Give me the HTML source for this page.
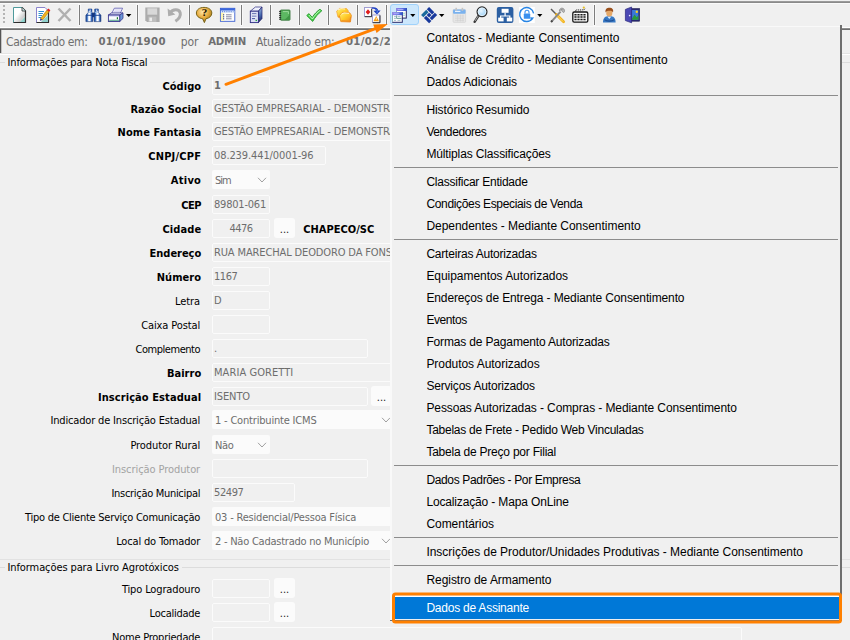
<!DOCTYPE html>
<html><head><meta charset="utf-8"><title>Cadastro</title>
<style>
html,body{margin:0;padding:0;}
body{width:850px;height:640px;overflow:hidden;background:#f0f0f0;position:relative;font-family:"DejaVu Sans Condensed","Liberation Sans",sans-serif;font-size:11px;color:#000;}
.a{position:absolute;}
.l{position:absolute;right:648.8px;white-space:nowrap;height:19px;line-height:21px;text-align:right;}
.b{font-weight:bold;}
.i{position:absolute;box-sizing:border-box;border:1px solid #fbfbfb;border-radius:2px;background:#f0f0f0;height:19px;line-height:17px;color:#6d6d6d;white-space:nowrap;overflow:hidden;padding-left:1px;}
.s{position:absolute;box-sizing:border-box;border-radius:2px;background:#fbfbfb;height:19px;line-height:22px;color:#6d6d6d;white-space:nowrap;overflow:hidden;padding-left:3px;}
.btn{position:absolute;box-sizing:border-box;border-radius:3px;background:#fbfbfb;width:21px;height:20px;text-align:center;line-height:23px;color:#222;}
.hl{position:absolute;height:1px;}
.sep{position:absolute;width:1px;top:5px;height:20px;background:#7d7d7d;box-shadow:0 0 0 1px #f8f8f8;}
.hd{position:absolute;top:30px;height:23px;line-height:24px;font-size:12px;color:#6f6f6f;white-space:nowrap;}
.m{position:absolute;left:36.4px;height:22px;line-height:22px;white-space:nowrap;}
.ms{position:absolute;left:4px;right:4px;height:1px;background:#8c8c8c;}
.menu{background:#f0f0f0;font-family:"Liberation Sans",sans-serif;font-size:12px;color:#000;}
</style></head><body>

<div class="hl" style="left:0;top:1px;width:850px;background:#9b9b9b"></div>
<div class="hl" style="left:0;top:2px;width:850px;background:#8a8a8a"></div>
<div class="hl" style="left:0;top:3px;width:850px;background:#fafafa"></div>
<div class="hl" style="left:0;top:27px;width:850px;background:#ffffff"></div>
<div class="hl" style="left:0;top:28px;width:850px;background:#8e8e8e"></div>
<div class="hl" style="left:0;top:29px;width:850px;background:#6f6f6f"></div>
<div class="a" style="left:0;top:29px;width:1px;height:24px;background:#545454"></div>
<div class="a" style="left:1px;top:30px;width:1px;height:23px;background:#c4c4c4"></div>
<div class="hl" style="left:0;top:53px;width:850px;background:#e4e4e4"></div>
<div class="hl" style="left:0;top:54px;width:850px;background:#ffffff"></div>
<div class="a" style="left:3px;top:5px;width:2px;height:2px;background:#b4b4b4"></div>
<div class="a" style="left:3px;top:9px;width:2px;height:2px;background:#b4b4b4"></div>
<div class="a" style="left:3px;top:13px;width:2px;height:2px;background:#b4b4b4"></div>
<div class="a" style="left:3px;top:17px;width:2px;height:2px;background:#b4b4b4"></div>
<div class="a" style="left:3px;top:21px;width:2px;height:2px;background:#b4b4b4"></div>
<div class="sep" style="left:79px"></div>
<div class="sep" style="left:137px"></div>
<div class="sep" style="left:189px"></div>
<div class="sep" style="left:241px"></div>
<div class="sep" style="left:270px"></div>
<div class="sep" style="left:299px"></div>
<div class="sep" style="left:328px"></div>
<div class="sep" style="left:357px"></div>
<div class="sep" style="left:386px"></div>
<div class="sep" style="left:594px"></div>
<svg class="a" style="left:0;top:0" width="850" height="27" viewBox="0 0 850 27">
<defs>
<linearGradient id="gdoc" x1="0" y1="0" x2="1" y2="1"><stop offset="0.4" stop-color="#ffffff"/><stop offset="0.72" stop-color="#cfcfcf"/><stop offset="0.9" stop-color="#f6f6f6"/></linearGradient>
<linearGradient id="gbin" x1="0" y1="0" x2="1" y2="0"><stop offset="0" stop-color="#16408f"/><stop offset="0.22" stop-color="#4a80cc"/><stop offset="0.42" stop-color="#ffffff"/><stop offset="0.6" stop-color="#ffffff"/><stop offset="0.82" stop-color="#3a6cc0"/><stop offset="1" stop-color="#122f78"/></linearGradient>
<linearGradient id="gsrv" x1="0" y1="0" x2="0" y2="1"><stop offset="0" stop-color="#9ab4dc"/><stop offset="0.5" stop-color="#4a6cb0"/><stop offset="1" stop-color="#161e5c"/></linearGradient>
<radialGradient id="ghelp" cx="0.4" cy="0.3" r="0.7"><stop offset="0" stop-color="#ffe6a6"/><stop offset="0.55" stop-color="#e6aa3c"/><stop offset="1" stop-color="#a07a1c"/></radialGradient>
<linearGradient id="gfold" x1="0" y1="0" x2="1" y2="1"><stop offset="0" stop-color="#fff27a"/><stop offset="0.5" stop-color="#ffcc28"/><stop offset="1" stop-color="#f28c1c"/></linearGradient>
<radialGradient id="glens" cx="0.4" cy="0.4" r="0.7"><stop offset="0" stop-color="#e8f6ff"/><stop offset="1" stop-color="#8cc8f4"/></radialGradient>
<linearGradient id="gwin" x1="0" y1="0" x2="1" y2="0"><stop offset="0" stop-color="#907cec"/><stop offset="0.5" stop-color="#6a78e4"/><stop offset="1" stop-color="#2a50c8"/></linearGradient>
<linearGradient id="gprn" x1="0" y1="0" x2="0" y2="1"><stop offset="0" stop-color="#b4b8ea"/><stop offset="0.4" stop-color="#ffffff"/><stop offset="0.8" stop-color="#f0f6f4"/><stop offset="1" stop-color="#bfe0d8"/></linearGradient>
</defs>
<!-- new document -->
<g>
<path d="M13.5 7.5 H22 L25.5 11 V22.5 H13.5 Z" fill="url(#gdoc)" stroke="#4f9a9c" stroke-width="1"/>
<path d="M20 22 L25 17 V22 Z" fill="#8fd2cc"/>
<path d="M22 7.5 L25.5 11 V22.5 H13.5" fill="none" stroke="#2e2e2e" stroke-width="1.2"/>
<path d="M22 7.5 V11 H25.5" fill="#cfeeee" stroke="#2e2e2e" stroke-width="0.8"/>
</g>
<!-- edit document -->
<g>
<path d="M36.5 7.5 H45 L48.5 11 V22.5 H36.5 Z" fill="#ffffff" stroke="#8a84cc" stroke-width="1"/>
<path d="M48.5 11 V22.5 H36.5" fill="none" stroke="#2e2e2e" stroke-width="1.2"/>
<path d="M41 22 L48 15 V22 Z" fill="#8fd0cc"/>
<path d="M38.5 11.5 H44 M38.5 13.5 H43 M38.5 15.5 H42 M38.5 17.5 H41" stroke="#2f8fd0" stroke-width="1"/>
<path d="M40.5 18.5 L47 10 L49.2 11.8 L42.5 20 Z" fill="#f2b41c" stroke="#8a5a00" stroke-width="0.5"/>
<path d="M47 10 L48.3 8.4 L50.4 10.2 L49.2 11.8 Z" fill="#e02020"/>
<path d="M40.5 18.5 L42.5 20 L39.8 20.8 Z" fill="#1c2a8a"/>
</g>
<!-- delete X (disabled) -->
<path d="M58.5 8.5 L70.5 21 M70.5 8.5 L58.5 21" stroke="#b0b0b0" stroke-width="2.5" fill="none"/>
<!-- binoculars -->
<g>
<rect x="91.8" y="12.6" width="3.6" height="4.6" fill="#183a82"/>
<path d="M88.3 9 H91.8 V12.4 L92.7 15.2 V21.6 H85.9 V15.2 L88.3 12.4 Z" fill="url(#gbin)" stroke="#14357c" stroke-width="0.6"/>
<path d="M94.8 9 H98.3 V12.4 L100.9 15.2 V21.6 H94.1 V15.2 L94.8 12.4 Z" fill="url(#gbin)" stroke="#14357c" stroke-width="0.6"/>
<rect x="88.3" y="9" width="3.5" height="2.2" fill="#1f4fa4"/><rect x="94.8" y="9" width="3.5" height="2.2" fill="#1f4fa4"/>
<rect x="89.4" y="9.6" width="1.4" height="1.2" fill="#eef4ff"/><rect x="95.9" y="9.6" width="1.4" height="1.2" fill="#eef4ff"/>
<path d="M88.6 12.4 H91.6 M95 12.4 H98" stroke="#9cc4ee" stroke-width="0.9"/>
<path d="M86.4 15.3 H92.4 M94.4 15.3 H100.6" stroke="#173f8f" stroke-width="0.9"/>
</g>
<!-- printer -->
<g>
<path d="M111.6 13.6 L114.4 8.2 H122.6 L120 13.6 Z" fill="#ffffff" stroke="#6a68b8" stroke-width="0.9"/>
<path d="M114.6 10 H120.8 M113.8 11.8 H120" stroke="#b4b2e6" stroke-width="0.7"/>
<path d="M108.4 15 L111.6 12.9 H123 L119.7 15 Z" fill="#eceefc" stroke="#3c3a90" stroke-width="0.8"/>
<path d="M119.7 15 L123 12.9 V18.4 L119.7 21.5 Z" fill="#6a9ad8" stroke="#3c3a90" stroke-width="0.8"/>
<rect x="108.4" y="15" width="11.3" height="6.5" fill="url(#gprn)" stroke="#3c3a90" stroke-width="0.9"/>
<rect x="109.2" y="19.8" width="9.8" height="1" fill="#5aa890"/>
<rect x="116.8" y="17.2" width="1.2" height="2" fill="#1a7a2a"/>
</g>
<path d="M126 14 H131.4 L128.7 17 Z" fill="#000"/>
<!-- save (disabled) -->
<g>
<path d="M145.3 7.5 H159.6 V22 H147 L145.3 20.3 Z" fill="#acacac"/>
<rect x="147.4" y="8.3" width="9.8" height="6.4" fill="#d8d8d8"/>
<rect x="148.4" y="16.6" width="8" height="5.4" fill="#bebebe"/>
<rect x="149.4" y="17.6" width="2.6" height="3.6" fill="#ececec"/>
</g>
<!-- undo (disabled) -->
<path d="M170 13 C172.6 9 179 8.6 180.2 12.8 C181 16.4 178.6 19 175.4 21.2" fill="none" stroke="#adadad" stroke-width="3"/>
<path d="M167.6 8.6 L168.2 16.2 L175.4 14.6 Z" fill="#adadad"/>
<!-- help -->
<g>
<path d="M204 7.4 C208.8 7.4 211.8 9.8 211.8 13 C211.8 16 209.4 18.2 206 18.7 L204.4 22.6 L202.6 18.7 C198.8 18.2 196.4 16 196.4 13 C196.4 9.8 199.4 7.4 204 7.4 Z" fill="url(#ghelp)" stroke="#7a6418" stroke-width="1"/>
<text x="204.4" y="16.4" text-anchor="middle" font-family="Liberation Serif, serif" font-weight="bold" font-size="11" fill="#140e00">?</text>
</g>
<!-- form icon -->
<g>
<rect x="220.4" y="8.3" width="14.4" height="13" fill="#ffffff" stroke="#3a5ed0" stroke-width="0.9"/>
<rect x="220.4" y="8.3" width="14.4" height="2.4" fill="#3a66dc"/>
<rect x="220.9" y="10.7" width="13.4" height="2" fill="#cfe0fa"/>
<path d="M222 11.7 H233.4" stroke="#4a6ad0" stroke-width="0.9" stroke-dasharray="0.9 1.3"/>
<rect x="220.9" y="12.8" width="3.2" height="8" fill="#fff6b4"/>
<path d="M223 14.8 H224.2 M223 16.8 H224.2 M223 18.8 H224.2" stroke="#2a3a9a" stroke-width="1"/>
<path d="M226 14.8 H231.6 M226 16.8 H231.6 M226 18.8 H231.6" stroke="#7a7a96" stroke-width="0.9"/>
</g>
<!-- server -->
<g>
<path d="M250.3 11.2 L255.4 7 H262 L258.4 11.2 Z" fill="#eef0fc" stroke="#2a2a80" stroke-width="0.7"/>
<path d="M258.4 11.2 L262 7 V18.6 L258.4 22.6 Z" fill="url(#gsrv)" stroke="#1c1c6a" stroke-width="0.7"/>
<rect x="250.3" y="11.2" width="8.1" height="11.4" fill="#dcdff6" stroke="#2a2a80" stroke-width="0.9"/>
<path d="M252 13.8 H256.4 M252 16.2 H256.4 M252 18.6 H255" stroke="#3a4a9a" stroke-width="0.9"/>
<path d="M252 14.7 H256.4 M252 17.1 H256.4" stroke="#ffffff" stroke-width="0.6"/>
<rect x="255.6" y="19.8" width="1.3" height="1.3" fill="#18a030"/>
</g>
<!-- green notebook -->
<g>
<rect x="280.4" y="10" width="9.6" height="10.2" rx="0.8" fill="#5cb862" stroke="#2a6a2e" stroke-width="0.8"/>
<path d="M283 11.6 H288.4 V14" fill="none" stroke="#a8e0a8" stroke-width="0.8"/>
<path d="M284.5 20 L290 14.5 V20 Z" fill="#3f9646"/>
<path d="M279 11.4 H281.2 M279 13.4 H281.2 M279 15.4 H281.2 M279 17.4 H281.2 M279 19.2 H281.2" stroke="#222" stroke-width="0.9"/>
</g>
<!-- check -->
<path d="M306.8 15.6 L308.8 13.6 L312.3 17.4 C314.4 14 316.8 11.4 320 9.2 L321.8 10.8 C318 13.8 315.2 17.2 312.7 21.4 Z" fill="#46d046" stroke="#22962a" stroke-width="0.9"/>
<path d="M308.8 15 L312.4 19 C314.6 15.4 317 12.6 320.4 10.2" fill="none" stroke="#c8fac8" stroke-width="0.9"/>
<!-- folders -->
<g>
<path d="M336.6 11.2 L339.6 8.4 L346.6 8.6 L348.4 11 L347.6 17.6 L338 17.2 Z" fill="url(#gfold)" stroke="#f0a030" stroke-width="0.7"/>
<path d="M338 9.8 L341 8.6 L345 9" stroke="#fff6c8" stroke-width="1" fill="none"/>
<path d="M339.4 15.4 L342.4 12.4 L349.8 12.8 L351.4 15.4 L350.4 22 L340.8 21.6 Z" fill="url(#gfold)" stroke="#ee8c1c" stroke-width="0.8"/>
<path d="M341.4 14.2 L344 12.9 L349 13.4" stroke="#fff6c8" stroke-width="1" fill="none"/>
<path d="M341.4 20.8 L350 21.2 L350.6 17" stroke="#f08a20" stroke-width="1.1" fill="none"/>
<path d="M338.6 16.6 L339.6 16.7" stroke="#f08a20" stroke-width="1.1" fill="none"/>
</g>
<!-- docs convert -->
<g>
<rect x="364.6" y="7.4" width="7" height="9.2" fill="#ffffff" stroke="#8a88c8" stroke-width="0.8"/>
<path d="M364.8 16.7 H371.7 V9" fill="none" stroke="#333" stroke-width="1"/>
<path d="M368 9.2 L370.4 12 L368 14.8 L365.6 12 Z" fill="#e01c1c"/>
<path d="M372 7.2 C376 6.8 378 8.4 378.2 10.6 L380.6 10.4 L377 14.6 L373.4 10.8 L375.8 10.7 C375.6 9.2 374.4 8.6 372 8.8 Z" fill="#1c3cc0"/>
<path d="M375.6 9.4 L377.4 10.6 L377 13" stroke="#6a9af0" stroke-width="0.8" fill="none"/>
<rect x="372.6" y="15" width="7.2" height="7.6" fill="#ffffff" stroke="#8a88c8" stroke-width="0.8"/>
<path d="M372.8 22.7 H380 V15.4" fill="none" stroke="#333" stroke-width="1"/>
<path d="M376.2 16 L379 21.2 H373.4 Z" fill="#f89c10"/>
<rect x="375.8" y="17.8" width="0.9" height="2" fill="#fff8d0"/>
</g>
<!-- active button -->
<rect x="390.5" y="4.5" width="28" height="20" rx="2.5" fill="#cce7fc" stroke="#a0d2fb" stroke-width="1"/>
<!-- windows icon -->
<g>
<rect x="396.2" y="8" width="10.6" height="10.6" fill="#2a2868"/>
<rect x="396.2" y="8" width="9.6" height="9.6" fill="#ffffff"/>
<rect x="396.2" y="8" width="0.8" height="9.6" fill="#6aa8a8"/>
<rect x="396.2" y="8" width="10.6" height="3" fill="url(#gwin)"/>
<path d="M397.6 9.5 H403.4" stroke="#c4c8ff" stroke-width="0.7"/>
<path d="M402.6 13.2 H405 M402.6 15.2 H405" stroke="#8ccfc4" stroke-width="0.9"/>
<rect x="392.2" y="12.2" width="10.6" height="10.6" fill="#2a2868"/>
<rect x="392.2" y="12.2" width="9.6" height="9.6" fill="#ffffff"/>
<rect x="392.2" y="12.2" width="0.8" height="9.6" fill="#6aa8a8"/>
<rect x="392.2" y="12.2" width="10.6" height="3" fill="url(#gwin)"/>
<path d="M393.6 13.7 H399.4" stroke="#c4c8ff" stroke-width="0.7"/>
<path d="M394 16.6 H396 M397.6 16.6 H400.4 M394 18.4 H396 M394 20.4 H396 M397.6 20.4 H400.4" stroke="#9ab8c8" stroke-width="0.9"/>
<path d="M396.6 15.4 V18.4 H401.6" fill="none" stroke="#4a8a86" stroke-width="0.8"/>
</g>
<path d="M410.2 14 H415.4 L412.8 17 Z" fill="#000"/>
<!-- receita pinwheel -->
<g transform="translate(429.1,15.1) rotate(45)">
<rect x="-5.7" y="-5.7" width="7.40" height="3.2" fill="#17389c"/>
<rect x="2.50" y="-5.7" width="3.2" height="7.40" fill="#17389c"/>
<rect x="-1.70" y="2.50" width="7.40" height="3.2" fill="#17389c"/>
<rect x="-5.7" y="-1.70" width="3.2" height="7.40" fill="#1b6a9c"/>
<rect x="-1.70" y="-1.70" width="3.40" height="3.40" fill="#17389c"/>
</g>
<path d="M439 14 H444.4 L441.7 17 Z" fill="#000"/>
<!-- calendar faded -->
<g>
<rect x="453" y="9.4" width="12.6" height="13" rx="1" fill="#e6e6e6" stroke="#d0d0d0" stroke-width="0.6"/>
<rect x="453" y="9.4" width="12.6" height="4.4" rx="1" fill="#7ab2ee"/>
<rect x="455" y="10.8" width="5.4" height="1.2" fill="#e8f2ff"/>
<rect x="455.4" y="7.8" width="1.6" height="3" fill="#c4c4c4"/><rect x="461.6" y="7.8" width="1.6" height="3" fill="#c4c4c4"/>
<path d="M455 16 H464 M455 18.2 H464 M455 20.4 H464 M457.6 14.6 V21.6 M460.4 14.6 V21.6 M463 14.6 V21.6" stroke="#d2d2d2" stroke-width="0.7"/>
</g>
<!-- magnifier -->
<g>
<path d="M478.6 15.6 L474.6 21.8" stroke="#3a3a3a" stroke-width="2.4" stroke-linecap="round"/>
<path d="M478.4 15.6 L475 21" stroke="#c8c8c8" stroke-width="0.8"/>
<circle cx="482" cy="11.8" r="4.9" fill="url(#glens)" stroke="#2c2c2c" stroke-width="1.3"/>
<circle cx="482" cy="11.8" r="3.9" fill="none" stroke="#f4fbff" stroke-width="0.7"/>
</g>
<!-- org chart -->
<g>
<rect x="496.8" y="7" width="16.6" height="16" rx="2" fill="#2b5fa2"/>
<rect x="501.6" y="8.8" width="7" height="4" fill="#ffffff"/>
<path d="M505.1 12.8 V16 M500.6 18 V16 H509.8 V18" fill="none" stroke="#ffffff" stroke-width="1.2"/>
<rect x="498.2" y="17.6" width="5.4" height="3.8" fill="#ffffff"/><rect x="506.8" y="17.6" width="5.4" height="3.8" fill="#ffffff"/>
</g>
<!-- lock -->
<g>
<rect x="519" y="7" width="15.8" height="16" fill="#ffffff"/>
<path d="M532.4 18.6 A7 7 0 1 1 533.6 13.4" fill="none" stroke="#2684e4" stroke-width="1.4"/>
<path d="M531 20.6 L534.4 17.6 L530.2 17.2 Z" fill="#2684e4"/>
<rect x="523.8" y="13.6" width="6.4" height="5.2" rx="0.6" fill="#3a90ee"/>
<path d="M525 13.6 V12.2 A2 2 0 0 1 529 12.2 V13.6" fill="none" stroke="#3a90ee" stroke-width="1.1"/>
</g>
<path d="M537.2 14 H542.4 L539.8 17 Z" fill="#000"/>
<!-- tools -->
<g>
<path d="M551 9 L556.4 14.6" stroke="#5a5a5a" stroke-width="1.4"/>
<path d="M556.4 14.6 L563.6 21.8" stroke="#f2b21c" stroke-width="2.8" stroke-linecap="round"/>
<path d="M557 15.4 L563.2 21.6" stroke="#ffe27a" stroke-width="0.8"/>
<path d="M551.4 21.6 L560.6 11.6" stroke="#8a8a8a" stroke-width="2"/>
<path d="M559.4 11 A2.6 2.6 0 1 1 563.8 12.6 L561.6 11 L562.2 9 Z" fill="#b8b8b8" stroke="#7a7a7a" stroke-width="0.6"/>
<path d="M551 22 L552.4 20.6" stroke="#444" stroke-width="2"/>
</g>
<!-- keyboard -->
<g>
<path d="M575.4 11.4 C575.4 9 578 10.2 580 10 C582.4 9.8 584.8 10 585.2 8.6" fill="none" stroke="#222" stroke-width="1" stroke-dasharray="1 0.8"/>
<circle cx="583.8" cy="7.6" r="1.1" fill="#e8c020"/>
<rect x="572.8" y="12" width="15" height="10.2" rx="1.4" fill="#fafafa" stroke="#161616" stroke-width="1.3"/>
<path d="M574.4 14.7 H586.2 M574.4 17.1 H586.2 M574.4 19.6 H586.2" stroke="#1c1c1c" stroke-width="1.5" stroke-dasharray="2.2 0.8"/>
</g>
<!-- user -->
<g>
<path d="M603 22.4 C603 18 605 16 609.3 16 C613.6 16 615.6 18 615.6 22.4 Z" fill="#3678c4"/>
<path d="M607.2 16.4 L609.3 19 L611.4 16.4" fill="#dcecff"/>
<ellipse cx="609.3" cy="13" rx="3.1" ry="3.5" fill="#e4a868"/>
<path d="M605.6 12.6 C605 9 607 7.8 609.4 7.8 C612 7.8 613.8 9.2 613 12.6 C612.4 11 611.4 10.6 609.2 10.7 C607.2 10.7 606.2 11.2 605.6 12.6 Z" fill="#9a501c"/>
<path d="M604.6 19.6 C606.6 21.6 612 21.6 614.2 19.6" fill="none" stroke="#1f4e94" stroke-width="1.1"/>
</g>
<!-- picture / door -->
<g>
<rect x="630" y="8.6" width="9.6" height="12.6" fill="#2a2a70" stroke="#1a1a50" stroke-width="0.6"/>
<rect x="631.4" y="10" width="7" height="9.8" fill="#3a78d8"/>
<path d="M631.4 19.8 L634.6 14.6 L636.6 17.2 L638.4 15.4 V19.8 Z" fill="#2a9a3a"/>
<circle cx="636.8" cy="11.8" r="1.2" fill="#f6d020"/>
<path d="M625.4 9.4 L631.6 7 V22.8 L625.4 20.6 Z" fill="#4a48b4" stroke="#26247a" stroke-width="0.7"/>
<circle cx="629.6" cy="15.6" r="0.8" fill="#e8e8ff"/>
</g>
</svg>

<div class="hd" style="left:6px;font-size:12px;letter-spacing:-0.331px">Cadastrado em:</div>
<div class="hd b" style="left:98.4px;font-size:11.3px;letter-spacing:0.350px">01/01/1900</div>
<div class="hd" style="left:180.7px;font-size:12px;letter-spacing:-0.135px">por</div>
<div class="hd b" style="left:208.2px;font-size:11.3px;letter-spacing:-0.184px">ADMIN</div>
<div class="hd" style="left:256px;font-size:12px;letter-spacing:-0.160px">Atualizado em:</div>
<div class="hd b" style="left:345.9px;font-size:11.3px;letter-spacing:0.350px">01/02/2024</div>
<div class="hl" style="left:0;top:62px;width:850px;background:#dcdcdc"></div>
<div class="a" style="left:5px;top:55px;height:15px;line-height:15px;padding:0 3px 0 2.5px;background:#f0f0f0;white-space:nowrap;letter-spacing:-0.122px">Informações para Nota Fiscal</div>
<div class="l b" style="top:76px;right:648.8px;letter-spacing:0.063px">Código</div>
<div class="i" style="left:212px;top:76px;width:58px;font-weight:bold">1</div>
<div class="l b" style="top:99px;right:648.8px;letter-spacing:0.047px">Razão Social</div>
<div class="i" style="left:212px;top:99px;width:188px;letter-spacing:-0.103px">GESTÃO EMPRESARIAL - DEMONSTRAÇÃO</div>
<div class="l b" style="top:122px;right:648.8px;letter-spacing:0.064px">Nome Fantasia</div>
<div class="i" style="left:212px;top:122px;width:188px;letter-spacing:-0.103px">GESTÃO EMPRESARIAL - DEMONSTRAÇÃO</div>
<div class="l b" style="top:146px;right:648.8px;letter-spacing:0.203px">CNPJ/CPF</div>
<div class="i" style="left:212px;top:146px;width:114px;letter-spacing:-0.102px">08.239.441/0001-96</div>
<div class="l b" style="top:170px;right:648.8px;letter-spacing:0.274px">Ativo</div>
<div class="s" style="left:212px;top:170px;width:58px;letter-spacing:-1.000px">Sim</div>
<svg class="a" style="left:257px;top:177px" width="10" height="6" viewBox="0 0 10 6"><path d="M1 0.8 L5 5 L9 0.8" fill="none" stroke="#959595" stroke-width="0.9"/></svg>
<div class="l b" style="top:195px;right:648.8px;letter-spacing:-0.427px">CEP</div>
<div class="i" style="left:212px;top:195px;width:58px;letter-spacing:-0.215px">89801-061</div>
<div class="l b" style="top:219px;right:648.8px;letter-spacing:0.097px">Cidade</div>
<div class="i" style="left:212px;top:219px;width:58px;text-align:center;padding-left:0;letter-spacing:-0.497px">4476</div>
<div class="btn" style="left:274px;top:218px">...</div>
<div class="a b" style="left:303.3px;top:219px;height:19px;line-height:21px;white-space:nowrap;letter-spacing:0.009px">CHAPECO/SC</div>
<div class="l b" style="top:243px;right:648.8px;letter-spacing:-0.034px">Endereço</div>
<div class="i" style="left:212px;top:243px;width:188px;letter-spacing:-0.132px">RUA MARECHAL DEODORO DA FONSECA</div>
<div class="l b" style="top:267px;right:648.8px;letter-spacing:0.076px">Número</div>
<div class="i" style="left:212px;top:267px;width:58px;letter-spacing:-0.447px">1167</div>
<div class="l" style="top:291px;right:649.9px;letter-spacing:-0.064px">Letra</div>
<div class="i" style="left:212px;top:291px;width:58px">D</div>
<div class="l" style="top:315px;right:649.9px;letter-spacing:-0.114px">Caixa Postal</div>
<div class="i" style="left:212px;top:315px;width:58px"></div>
<div class="l" style="top:339px;right:649.9px;letter-spacing:-0.461px">Complemento</div>
<div class="i" style="left:212px;top:339px;width:156px">.</div>
<div class="l b" style="top:363px;right:648.8px;letter-spacing:0.005px">Bairro</div>
<div class="i" style="left:212px;top:363px;width:188px;letter-spacing:0.069px">MARIA GORETTI</div>
<div class="l b" style="top:387px;right:648.8px;letter-spacing:0.083px">Inscrição Estadual</div>
<div class="i" style="left:212px;top:387px;width:156px;letter-spacing:-0.115px">ISENTO</div>
<div class="btn" style="left:371px;top:386px">...</div>
<div class="l" style="top:410px;right:649.9px;letter-spacing:-0.165px">Indicador de Inscrição Estadual</div>
<div class="s" style="left:212px;top:410px;width:188px;letter-spacing:-0.188px">1 - Contribuinte ICMS</div>
<svg class="a" style="left:381px;top:417px" width="10" height="6" viewBox="0 0 10 6"><path d="M1 0.8 L5 5 L9 0.8" fill="none" stroke="#959595" stroke-width="0.9"/></svg>
<div class="l" style="top:435px;right:649.9px;letter-spacing:-0.085px">Produtor Rural</div>
<div class="s" style="left:212px;top:435px;width:58px;letter-spacing:-0.344px">Não</div>
<svg class="a" style="left:257px;top:442px" width="10" height="6" viewBox="0 0 10 6"><path d="M1 0.8 L5 5 L9 0.8" fill="none" stroke="#959595" stroke-width="0.9"/></svg>
<div class="l" style="top:459px;right:649.9px;letter-spacing:-0.079px;color:#a3a3a3">Inscrição Produtor</div>
<div class="i" style="left:212px;top:459px;width:156px"></div>
<div class="l" style="top:483px;right:649.9px;letter-spacing:-0.307px">Inscrição Municipal</div>
<div class="i" style="left:212px;top:483px;width:83px;letter-spacing:-0.397px">52497</div>
<div class="l" style="top:507px;right:649.9px;letter-spacing:-0.254px">Tipo de Cliente Serviço Comunicação</div>
<div class="s" style="left:212px;top:507px;width:188px;letter-spacing:-0.197px">03 - Residencial/Pessoa Física</div>
<div class="l" style="top:531px;right:649.9px;letter-spacing:-0.168px">Local do Tomador</div>
<div class="s" style="left:212px;top:531px;width:188px;letter-spacing:-0.238px">2 - Não Cadastrado no Município</div>
<svg class="a" style="left:381px;top:538px" width="10" height="6" viewBox="0 0 10 6"><path d="M1 0.8 L5 5 L9 0.8" fill="none" stroke="#959595" stroke-width="0.9"/></svg>
<div class="l" style="top:579px;right:649.9px;letter-spacing:-0.135px">Tipo Logradouro</div>
<div class="i" style="left:212px;top:579px;width:58px"></div>
<div class="btn" style="left:274px;top:578px">...</div>
<div class="l" style="top:603px;right:649.9px;letter-spacing:-0.261px">Localidade</div>
<div class="i" style="left:212px;top:603px;width:58px"></div>
<div class="btn" style="left:274px;top:602px">...</div>
<div class="l" style="top:627px;right:649.9px;letter-spacing:-0.238px">Nome Propriedade</div>
<div class="i" style="left:212px;top:627px;width:530px"></div>
<div class="hl" style="left:0;top:559px;width:850px;background:#e2e2e2"></div>
<div class="hl" style="left:0;top:567px;width:850px;background:#dcdcdc"></div>
<div class="a" style="left:5px;top:560px;height:15px;line-height:15px;padding:0 3px 0 2.5px;background:#f0f0f0;white-space:nowrap;letter-spacing:-0.101px">Informações para Livro Agrotóxicos</div>
<div class="a menu" style="left:390px;top:26px;width:452px;height:595px">
<div class="a" style="left:0;top:0;width:2px;height:595px;background:#f9f9f9"></div>
<div class="a" style="left:0;top:0;width:452px;height:1px;background:#f9f9f9"></div>
<div class="a" style="left:450px;top:-1px;width:2px;height:596px;background:#6e6e6e"></div>
<div class="a" style="left:0;top:594px;width:452px;height:1px;background:#6e6e6e"></div>
<div class="m" style="top:1px;letter-spacing:0.030px">Contatos - Mediante Consentimento</div>
<div class="m" style="top:23px;letter-spacing:-0.022px">Análise de Crédito - Mediante Consentimento</div>
<div class="m" style="top:45px;letter-spacing:-0.091px">Dados Adicionais</div>
<div class="ms" style="top:69px"></div>
<div class="m" style="top:73px;letter-spacing:-0.058px">Histórico Resumido</div>
<div class="m" style="top:95px;letter-spacing:-0.406px">Vendedores</div>
<div class="m" style="top:117px;letter-spacing:-0.133px">Múltiplas Classificações</div>
<div class="ms" style="top:141px"></div>
<div class="m" style="top:145px;letter-spacing:-0.238px">Classificar Entidade</div>
<div class="m" style="top:167px;letter-spacing:-0.338px">Condições Especiais de Venda</div>
<div class="m" style="top:189px;letter-spacing:-0.035px">Dependentes - Mediante Consentimento</div>
<div class="ms" style="top:213px"></div>
<div class="m" style="top:217px;letter-spacing:-0.206px">Carteiras Autorizadas</div>
<div class="m" style="top:239px;letter-spacing:-0.049px">Equipamentos Autorizados</div>
<div class="m" style="top:261px;letter-spacing:-0.122px">Endereços de Entrega - Mediante Consentimento</div>
<div class="m" style="top:283px;letter-spacing:-0.423px">Eventos</div>
<div class="m" style="top:305px;letter-spacing:-0.158px">Formas de Pagamento Autorizadas</div>
<div class="m" style="top:327px;letter-spacing:-0.044px">Produtos Autorizados</div>
<div class="m" style="top:349px;letter-spacing:-0.183px">Serviços Autorizados</div>
<div class="m" style="top:371px;letter-spacing:-0.094px">Pessoas Autorizadas - Compras - Mediante Consentimento</div>
<div class="m" style="top:393px;letter-spacing:-0.246px">Tabelas de Frete - Pedido Web Vinculadas</div>
<div class="m" style="top:415px;letter-spacing:-0.223px">Tabela de Preço por Filial</div>
<div class="ms" style="top:439px"></div>
<div class="m" style="top:443px;letter-spacing:-0.348px">Dados Padrões - Por Empresa</div>
<div class="m" style="top:465px;letter-spacing:-0.148px">Localização - Mapa OnLine</div>
<div class="m" style="top:487px;letter-spacing:-0.039px">Comentários</div>
<div class="ms" style="top:511px"></div>
<div class="m" style="top:515px;letter-spacing:-0.024px">Inscrições de Produtor/Unidades Produtivas - Mediante Consentimento</div>
<div class="ms" style="top:539px"></div>
<div class="m" style="top:543px;letter-spacing:-0.046px">Registro de Armamento</div>
<div class="ms" style="top:567px"></div>
<div class="a" style="left:3px;top:570px;width:446px;height:1px;background:#fff"></div>
<div class="a" style="left:3px;top:571px;width:446px;height:22px;background:#0078d7"></div>
<div class="m" style="top:571px;color:#fff;letter-spacing:-0.231px">Dados de Assinante</div>
</div>
<svg class="a" style="left:380px;top:585px" width="470" height="45" viewBox="380 585 470 45"><rect x="393.5" y="593.9" width="447" height="28.2" rx="2" ry="2" fill="none" stroke="#ff8000" stroke-width="3"/></svg>
<svg class="a" style="left:0;top:0" width="850" height="100" viewBox="0 0 850 100"><line x1="226" y1="84.3" x2="378" y2="27.7" stroke="#ff8000" stroke-width="3" stroke-linecap="round"/><polygon points="387.8,24 373.2,24.6 376.6,33" fill="#ff8000"/></svg>

</body></html>
